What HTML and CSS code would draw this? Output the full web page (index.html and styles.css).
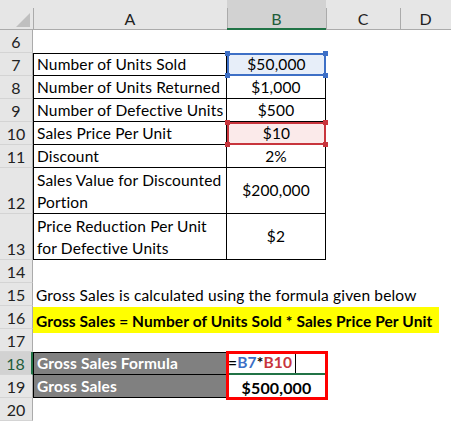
FILE: index.html
```html
<!DOCTYPE html>
<html>
<head>
<meta charset="utf-8">
<link rel="stylesheet" href="styles.css">
</head>
<body>
<div class="sheet">
  <div class="corner"><svg width="33" height="30" viewBox="0 0 33 30"><polygon points="30,13 30,27 16,27" fill="#bfbfbf"/></svg></div>
  <div class="colh">A</div>
  <div class="colh sel">B</div>
  <div class="colh">C</div>
  <div class="colh last">D</div>

  <div class="rowh">6</div>
  <div class="cell span4"></div>

  <div class="rowh">7</div>
  <div class="cell ta tt">Number of Units Sold</div>
  <div class="cell tb tt hl-blue"><span>$50,000</span><i class="h tl b"></i><i class="h tr b"></i><i class="h bl b"></i><i class="h br b"></i></div>
  <div class="cell span2"></div>

  <div class="rowh">8</div>
  <div class="cell ta">Number of Units Returned</div>
  <div class="cell tb">$1,000</div>
  <div class="cell span2"></div>

  <div class="rowh">9</div>
  <div class="cell ta">Number of Defective Units</div>
  <div class="cell tb">$500</div>
  <div class="cell span2"></div>

  <div class="rowh">10</div>
  <div class="cell ta">Sales Price Per Unit</div>
  <div class="cell tb hl-red"><span>$10</span><i class="h tl r"></i><i class="h tr r"></i><i class="h bl r"></i><i class="h br r"></i></div>
  <div class="cell span2"></div>

  <div class="rowh">11</div>
  <div class="cell ta">Discount</div>
  <div class="cell tb">2%</div>
  <div class="cell span2"></div>

  <div class="rowh">12</div>
  <div class="cell ta wrap">Sales Value for Discounted Portion</div>
  <div class="cell tb mid">$200,000</div>
  <div class="cell span2"></div>

  <div class="rowh">13</div>
  <div class="cell ta wrap">Price Reduction Per Unit for Defective Units</div>
  <div class="cell tb mid">$2</div>
  <div class="cell span2"></div>

  <div class="rowh">14</div>
  <div class="cell span4"></div>

  <div class="rowh">15</div>
  <div class="cell span4 over">Gross Sales is calculated using the formula given below</div>

  <div class="rowh">16</div>
  <div class="cell span4 over yellow-row"><span class="yellow">Gross Sales = Number of Units Sold * Sales Price Per Unit</span></div>

  <div class="rowh">17</div>
  <div class="cell span4"></div>

  <div class="rowh r18 active">18</div>
  <div class="cell ta gray tt r18">Gross Sales Formula</div>
  <div class="cell formula r18"><span class="k">=</span><span class="ref-b">B7</span><span class="k">*</span><span class="ref-r">B10</span><span class="caret"></span></div>
  <div class="cell span2 r18"></div>

  <div class="rowh r19">19</div>
  <div class="cell ta gray r19">Gross Sales</div>
  <div class="cell result r19">$500,000</div>
  <div class="cell span2 r19"></div>

  <div class="rowh r20">20</div>
  <div class="cell span4 r20"></div>

  <div class="redbox"></div>
</div>
</body>
</html>
```

FILE: styles.css
```css
html, body {
  margin: 0;
  padding: 0;
  background: #ffffff;
}

.sheet {
  display: grid;
  grid-template-columns: 33px 194px 99px 74px 51px;
  grid-template-rows: 30px repeat(6, 23px) 46px 46px repeat(7, 23px);
  width: 451px;
  height: 421px;
  overflow: hidden;
  font-family: Lato, "Open Sans", sans-serif;
  font-size: 15.5px;
  letter-spacing: 0.15px;
  color: #000;
}

.r18 { grid-row: 14; }
.r19 { grid-row: 15; }
.r20 { grid-row: 16; }

.corner {
  background: #e6e6e6;
  border-bottom: 1px solid #ababab;
  box-sizing: border-box;
}
.corner svg { display: block; }

.colh {
  background: #e6e6e6;
  border-bottom: 1px solid #ababab;
  box-sizing: border-box;
  display: flex;
  align-items: center;
  justify-content: center;
  padding-top: 8px;
  background-image: linear-gradient(#ababab, #ababab);
  background-size: 1px 21px;
  background-position: 0 8px;
  background-repeat: no-repeat;
  font-size: 16px;
  letter-spacing: 0;
  color: #222;
}
.colh.sel {
  background-color: #d2d2d2;
  border-bottom: 2px solid #217346;
  color: #1e5d3a;
}

.rowh {
  grid-column: 1;
  background: #e6e6e6;
  border-right: 1px solid #ababab;
  border-bottom: 1px solid #d4d4d4;
  box-sizing: border-box;
  display: flex;
  align-items: flex-end;
  justify-content: center;
  padding-bottom: 1px;
  font-size: 16px;
  letter-spacing: 0;
  color: #222;
}
.rowh.active {
  background: #d2d2d2;
  border-right: 2px solid #217346;
  color: #1e5d3a;
}

.cell {
  box-sizing: border-box;
  display: flex;
  align-items: flex-end;
  padding: 0 3px 1px 3px;
  line-height: 19px;
  white-space: nowrap;
  position: relative;
}
.span4 { grid-column: 2 / 6; }
.span2 { grid-column: 4 / 6; }

.ta {
  grid-column: 2;
  border-left: 1px solid #000;
  border-bottom: 1px solid #000;
  border-right: 1px solid #000;
}
.tb {
  grid-column: 3;
  border-bottom: 1px solid #000;
  border-right: 1px solid #000;
  justify-content: center;
}
.tt { border-top: 1px solid #000; }

.wrap {
  white-space: normal;
  line-height: 22px;
  padding-bottom: 0;
}
.mid { align-items: center; padding-bottom: 0; }

.hl-blue {
  background: #e7eef9;
  border: 2px solid #3d6fc6;
  padding-bottom: 0;
}
.hl-red {
  background: #fbeaea;
  border: 2px solid #c8353d;
  padding-bottom: 0;
}
.h {
  position: absolute;
  width: 5px;
  height: 5px;
  z-index: 2;
}
.h.b { background: #3d6fc6; }
.h.r { background: #c8353d; }
.h.tl { left: -4px; top: -4px; }
.h.tr { right: -4px; top: -4px; }
.h.bl { left: -4px; bottom: -4px; }
.h.br { right: -4px; bottom: -4px; }

.over { overflow: visible; z-index: 1; }
.yellow-row { padding-left: 0; padding-bottom: 0; align-items: stretch; }
.yellow {
  display: flex;
  align-items: flex-end;
  background: #ffff00;
  width: 406px;
  box-sizing: border-box;
  padding: 0 0 2px 3px;
  height: 26px;
  margin-top: 1px;
  font-weight: 700;
  letter-spacing: 0.1px;
}

.gray {
  background: #808080;
  color: #fff;
  font-weight: 700;
}

.formula {
  grid-column: 3;
  font-weight: 700;
  padding-left: 1px;
  border-bottom: 2px solid #217346;
}
.k { color: #000; }
.ref-b { color: #3d6fc6; }
.ref-r { color: #c8353d; }
.caret {
  display: inline-block;
  width: 1px;
  height: 20px;
  background: #000;
  margin-left: 3px;
  margin-bottom: -1px;
}

.result {
  grid-column: 3;
  justify-content: center;
  font-weight: 700;
  font-size: 16px;
}

.redbox {
  grid-column: 3;
  grid-row: 14 / 16;
  border: 3px solid #ff0000;
  margin: -1px -2px -2px -1px;
  z-index: 3;
  pointer-events: none;
}
```
